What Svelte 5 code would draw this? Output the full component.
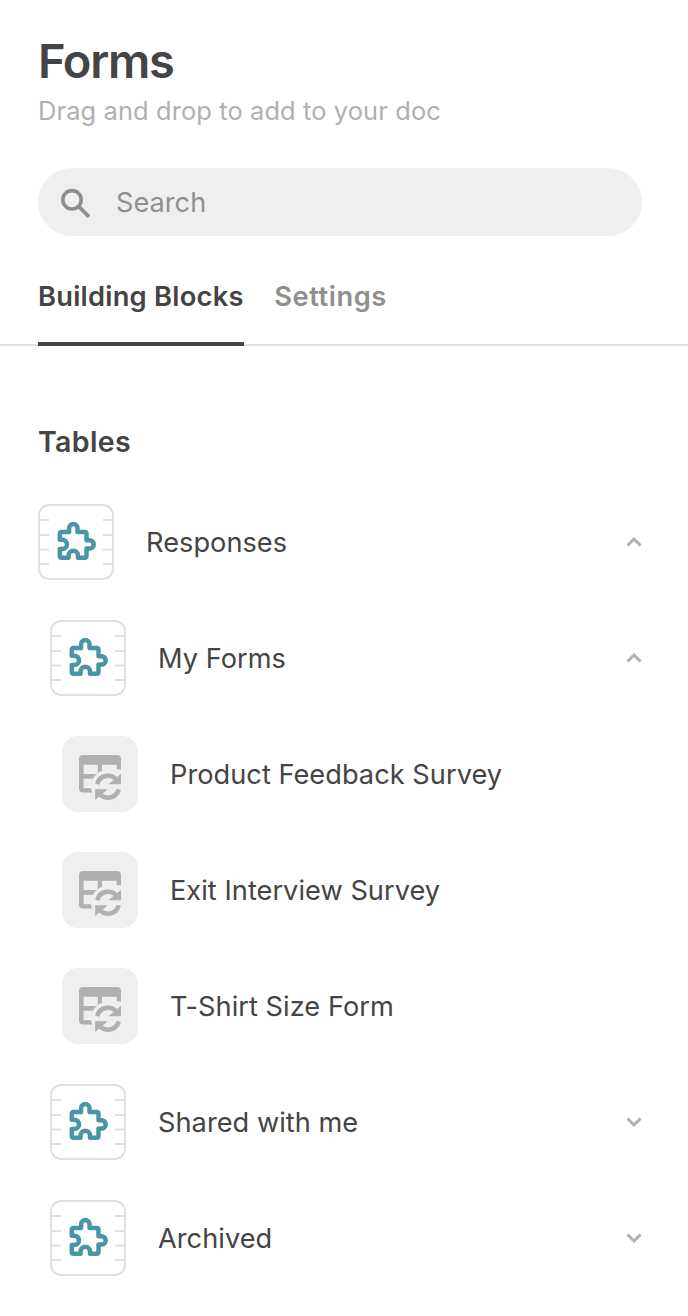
<script>
  const rows = [
    { label: 'Responses', level: 0, kind: 'pack', open: true },
    { label: 'My Forms', level: 1, kind: 'pack', open: true },
    { label: 'Product Feedback Survey', level: 2, kind: 'table' },
    { label: 'Exit Interview Survey', level: 2, kind: 'table' },
    { label: 'T-Shirt Size Form', level: 2, kind: 'table' },
    { label: 'Shared with me', level: 1, kind: 'pack', open: false },
    { label: 'Archived', level: 1, kind: 'pack', open: false }
  ];
</script>

<main>
  <header>
    <h1>Forms</h1>
    <p>Drag and drop to add to your doc</p>
    <label class="search">
      <svg width="32" height="32" viewBox="0 0 32 32" fill="none" stroke="#8f8f8f">
        <circle cx="12" cy="13.8" r="9.2" stroke-width="3.6" />
        <path d="M18.400 20.200L29 30.800" stroke-width="3.8" />
      </svg>
      <span>Search</span>
    </label>
  </header>

  <nav>
    <a class="active">Building Blocks</a>
    <a class="other">Settings</a>
  </nav>

  <section>
    <h2>Tables</h2>
    <ul>
      {#each rows as row}
        <li class="level{row.level}">
          {#if row.kind === 'pack'}
            <svg width="76" height="76" viewBox="0 0 76 76" fill="none">
              <rect x="1" y="1" width="74" height="74" rx="10" stroke="#e0e0e0" stroke-width="2" />
              <path d="M2 16H11M2 31H11M2 45.500H11M2 60H11M65 16H74M65 31H74M65 45.500H74M65 60H74" stroke="#e0e0e0" stroke-width="2" />
              <path stroke="#4896a5" stroke-width="4.500" stroke-linejoin="round" d="M24 28H31.100V24.300A4.200 4.200 0 0 1 39.500 24.300V28H46.500Q48.500 28 48.500 30V36.200H51.500A4.200 4.200 0 0 1 51.500 44.600H48.500V51.800Q48.500 53.800 46.500 53.800H40V51.500A4.700 4.700 0 0 0 30.600 51.500V53.800H23.800Q21.800 53.800 21.800 51.800V45.100H24.300A4.700 4.700 0 0 0 24.300 35.700H21.800V30Q21.800 28 23.800 28Z" />
            </svg>
          {:else}
            <svg width="76" height="76" viewBox="0 0 76 76">
              <rect width="76" height="76" rx="16" fill="#efefef" />
              <path fill="#b0b0b0" fill-rule="evenodd" d="M21 19H55Q59 19 59 23V56.500H21Q17 56.500 17 52.500V23Q17 19 21 19ZM21.600 28.700V38H35.700V28.700ZM40 28.700V38H54.700V28.700ZM21.600 42.700V52.300H35.700V42.700Z" />
              <circle cx="46" cy="50.700" r="17" fill="#efefef" />
              <path fill="#efefef" d="M52 33.300H60V58H52Z" />
              <path fill="none" stroke="#b0b0b0" stroke-width="4.600" d="M35.300 48.200A11 11 0 0 1 55.500 45.200M56.700 53.200A11 11 0 0 1 36.500 56.200" />
              <path fill="#b0b0b0" d="M59 37.700V48.200H46.500ZM33.200 53.200H45.700L33.200 64Z" />
            </svg>
          {/if}
          <span>{row.label}</span>
          {#if row.open !== undefined}
            <svg class="chevron" class:down={!row.open} width="16" height="10" viewBox="0 0 16 10">
              <path d="M1.500 8.500L8 2L14.500 8.500" fill="none" stroke="#b0b0b0" stroke-width="3" />
            </svg>
          {/if}
        </li>
      {/each}
    </ul>
  </section>
</main>

<style>
  :global(body) { background: #fff; }
  main { height: 1316px; overflow: hidden; box-sizing: border-box; padding-top: 34px; font-family: Inter, sans-serif; color: #444; }
  header { padding: 0 46px 0 38px; }
  h1, h2, p, ul { margin: 0; padding: 0; }
  h1 { font-size: 47px; line-height: 54px; font-weight: 600; letter-spacing: -1.3px; }
  p { font-size: 25.4px; line-height: 32px; margin-top: 7px; color: #b0b0b0; letter-spacing: 0.13px; }
  .search { display: flex; align-items: center; height: 68px; margin-top: 41px; padding-left: 22px; gap: 24px; border-radius: 34px; background: #efefef; color: #8f8f8f; font-size: 27.2px; box-sizing: border-box; }
  nav { display: flex; gap: 30.5px; height: 110px; padding-left: 38px; box-sizing: border-box; border-bottom: 2px solid #e0e0e0; font-size: 27.3px; letter-spacing: 0.25px; font-weight: 600; color: #8f8f8f; }
  nav a { padding-top: 43px; height: 67px; line-height: 35px; box-sizing: content-box; }
  nav a.active { color: #444; border-bottom: 4px solid #444; height: 63px; }
  nav a.other { letter-spacing: 0.55px; }
  section { padding: 76px 46px 0 38px; }
  h2 { font-size: 28.5px; line-height: 40px; font-weight: 600; letter-spacing: 0.35px; }
  ul { display: flex; flex-direction: column; gap: 40px; margin-top: 42px; list-style: none; }
  li { display: flex; align-items: center; gap: 32px; height: 76px; font-size: 27.2px; letter-spacing: 0.03px; }
  li span { padding-top: 1px; }
  .level1 { padding-left: 12px; }
  .level2 { padding-left: 24px; }
  svg { display: block; flex: none; }
  .chevron { margin-left: auto; }
  .down { transform: scaleY(-1); }
</style>
